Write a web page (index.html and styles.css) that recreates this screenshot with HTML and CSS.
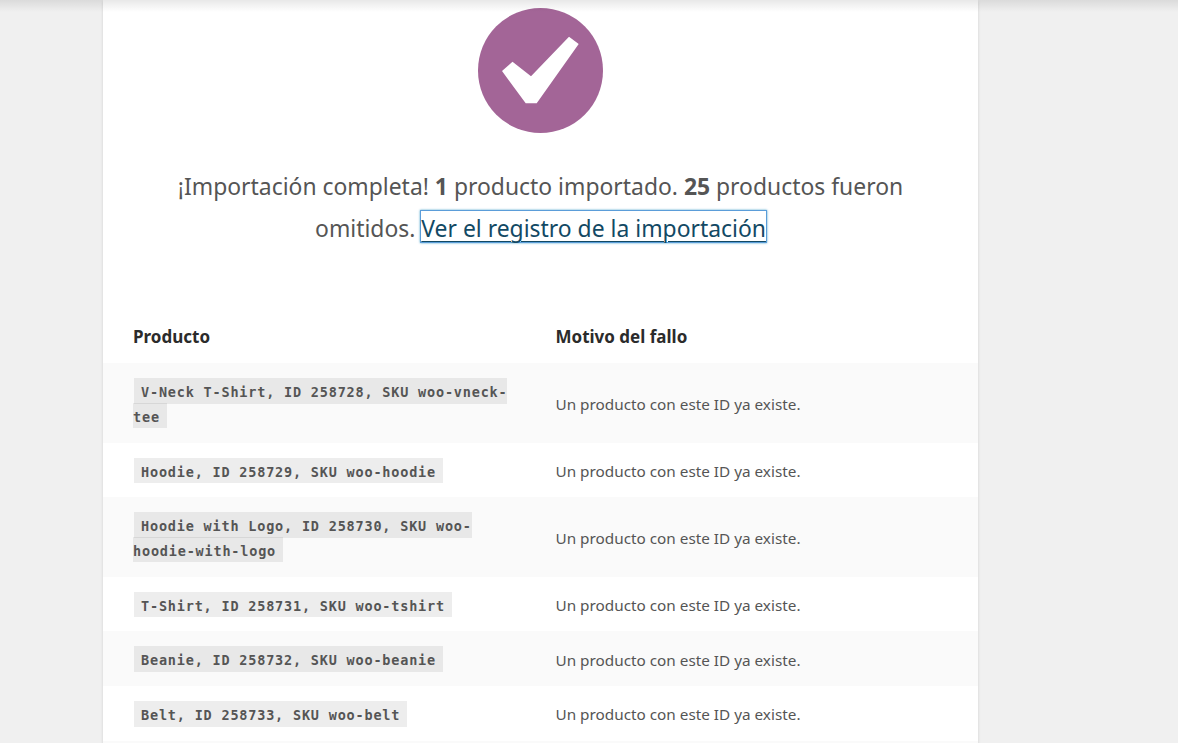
FILE: index.html
```html
<!DOCTYPE html>
<html lang="es">
<head>
<meta charset="utf-8">
<title>Importación completa</title>
<link rel="stylesheet" href="styles.css">
</head>
<body>
<div class="top-shadow"></div>
<main class="card">
  <section class="done">
    <svg class="check" width="125" height="125" viewBox="0 0 125 125" aria-hidden="true">
      <circle cx="62.5" cy="62.5" r="62.5" fill="#a36597"/>
      <polygon fill="#fff" points="24,63 34.500,53.700 53,68.300 91,28.700 100.700,36 58.700,95.300 47.700,95.300"/>
    </svg>
    <p class="summary">¡Importación completa! <strong>1</strong> producto importado. <strong>25</strong> productos fueron omitidos. <a class="log-link" href="#">Ver el registro de la importación</a></p>
  </section>
  <table class="log">
    <thead>
      <tr><th class="col-product">Producto</th><th>Motivo del fallo</th></tr>
    </thead>
    <tbody>
      <tr><td class="col-product"><code>V-Neck T-Shirt, ID 258728, SKU woo-vneck-tee</code></td><td>Un producto con este ID ya existe.</td></tr>
      <tr><td class="col-product"><code>Hoodie, ID 258729, SKU woo-hoodie</code></td><td>Un producto con este ID ya existe.</td></tr>
      <tr><td class="col-product"><code>Hoodie with Logo, ID 258730, SKU woo-hoodie-with-logo</code></td><td>Un producto con este ID ya existe.</td></tr>
      <tr><td class="col-product"><code>T-Shirt, ID 258731, SKU woo-tshirt</code></td><td>Un producto con este ID ya existe.</td></tr>
      <tr><td class="col-product"><code>Beanie, ID 258732, SKU woo-beanie</code></td><td>Un producto con este ID ya existe.</td></tr>
      <tr><td class="col-product"><code>Belt, ID 258733, SKU woo-belt</code></td><td>Un producto con este ID ya existe.</td></tr>
      <tr><td class="col-product"><code>Cap, ID 258734, SKU woo-cap</code></td><td>Un producto con este ID ya existe.</td></tr>
    </tbody>
  </table>
</main>
</body>
</html>
```

FILE: styles.css
```css
html, body {
  margin: 0;
  height: 743px;
  overflow: hidden;
}
body {
  background: #f0f0f0;
  font-family: "Noto Sans", "Open Sans", sans-serif;
  color: #555;
}
.top-shadow {
  position: absolute;
  top: 0;
  left: 0;
  right: 0;
  height: 12px;
  background: linear-gradient(to bottom, rgba(0,0,0,.09), rgba(0,0,0,0));
}
.card {
  width: 875px;
  margin-left: 103px;
  background: #fff;
  box-shadow: 0 1px 3px rgba(0,0,0,.13);
  padding-top: 8px;
  min-height: 900px;
}
.done {
  text-align: center;
  padding: 0 60px;
}
.check {
  display: block;
  margin: 0 auto;
}
.summary {
  margin: 33px 0 0;
  font-size: 22.9px;
  line-height: 42px;
  color: #555;
}
.summary strong {
  font-weight: 700;
}
.log-link {
  display: inline-block;
  line-height: 27.2px;
  padding-top: 4px;
  color: #124964;
  text-decoration: underline;
  text-decoration-thickness: 1px;
  text-underline-offset: 4px;
  box-shadow: 0 0 0 1px #5b9dd9, 0 0 2px 1px rgba(30,140,190,.8);
}
.log {
  width: 875px;
  border-collapse: collapse;
  table-layout: fixed;
  margin-top: 74px;
}
.log th {
  text-align: left;
  font-size: 17px;
  font-weight: 700;
  color: #2b2b2b;
  padding: 0 30px 13.3px 0;
  line-height: 26px;
}
.log td {
  padding: 16.4px 30px 13.6px 0;
  font-size: 15.3px;
  line-height: 24.67px;
  color: #555;
  vertical-align: middle;
}
.log .col-product {
  width: 422.5px;
  padding-left: 30px;
  padding-right: 0;
}
.log td.col-product {
  padding: 16px 30px 14px 30px;
}
.log tbody tr:nth-child(odd) {
  background: #fafafa;
}
code {
  font-family: "DejaVu Sans Mono", "Liberation Mono", monospace;
  font-weight: 700;
  font-size: 13.5px;
  line-height: 16px;
  letter-spacing: .81px;
  color: #555;
  background: rgba(0,0,0,.07);
  padding: 6px 7px 3.5px;
  margin: 0 1px;
}
```
